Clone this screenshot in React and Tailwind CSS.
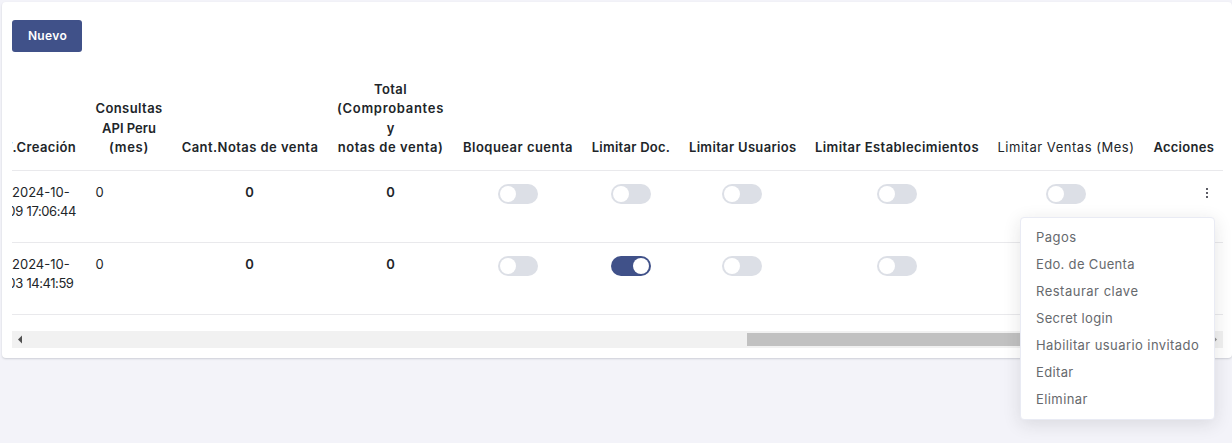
const GRID = "grid grid-cols-[74px_86px_155px_127px_128px_97px_126px_184px_154px_80px]";

const ROWS = [
  { day: "09", time: "17:06:44", timeClass: "tracking-[-0.4px]", switches: [false, false, false, false, false] },
  { day: "03", time: "14:41:59", timeClass: "tracking-[-0.45px]", switches: [false, true, false, false, false] },
];

const MENU = [
  ["Pagos", "tracking-[0.5px]"],
  ["Edo. de Cuenta", "tracking-[0.33px]"],
  ["Restaurar clave", "tracking-[0.5px]"],
  ["Secret login", "tracking-[0.3px]"],
  ["Habilitar usuario invitado", "tracking-[0.42px]"],
  ["Editar", "tracking-[0.35px]"],
  ["Eliminar", "tracking-[0.42px]"],
];

function Switch({ on }) {
  return (
    <span
      role="switch"
      aria-checked={on}
      className={`flex h-5 w-10 items-center rounded-full px-0.5 ${on ? "justify-end bg-[#405189]" : "justify-start bg-[#dcdfe6]"}`}
    >
      <span className="size-4 rounded-full bg-white" />
    </span>
  );
}

function Head({ className = "", children }) {
  return <div className={`flex flex-col items-center justify-end whitespace-nowrap pb-[12.5px] ${className}`}>{children}</div>;
}

function Row({ row, first }) {
  return (
    <div className={`${GRID} h-[72px] border-b border-[#e9e9ec] pt-3`}>
      <div className="flex flex-col overflow-hidden whitespace-nowrap leading-[19px]">
        <span className="tracking-[0px]">2024-10-</span>
        <span className="-ml-1.5 flex w-[70px] justify-end gap-[3.5px]">
          <span className="tracking-[-0.2px]">{row.day}</span>
          <span className={`w-[49.5px] ${row.timeClass}`}>{row.time}</span>
        </span>
      </div>
      <div className="pl-[9.5px]">0</div>
      <div className="text-center font-semibold">0</div>
      <div className="text-center font-semibold">0</div>
      {row.switches.map((on, i) => (
        <div key={i} className="flex justify-center pt-px">
          <Switch on={on} />
        </div>
      ))}
      <div className="flex justify-end pr-[14px] pt-[5px]">
        {first && (
          <svg width="4" height="12" viewBox="0 0 4 12" fill="#5d5d66" aria-hidden="true">
            <rect x="1" y="0" width="2" height="2" />
            <rect x="1" y="4" width="2" height="2" />
            <rect x="1" y="8" width="2" height="2" />
          </svg>
        )}
      </div>
    </div>
  );
}

export default function App() {
  return (
    <div className="relative h-[443px] w-[1232px] overflow-hidden bg-[#f3f3f9] pl-0.5 pt-0.5 font-['Inter',sans-serif] text-[13px] leading-[19.5px] text-[#212529]">
      <main className="flex h-[356px] flex-col rounded bg-white pl-2.5 pt-[18px] shadow-[0_1px_2px_rgba(56,65,74,0.2)]">
        <button className="h-8 w-[70px] rounded-[3px] bg-[#405189] pl-px text-xs font-semibold tracking-[0.35px] text-white">
          Nuevo
        </button>

        <div className="mt-[27px] w-[1211px]">
          <div className={`${GRID} h-[92px] border-b border-[#e9e9ec] font-semibold`}>
            <Head className="overflow-hidden">
              <span className="mr-2.5 self-end tracking-[0.36px]">F.Creación</span>
            </Head>
            <Head>
              <span className="tracking-[0.42px]">Consultas</span>
              <span>API Peru</span>
              <span className="tracking-[0.7px]">(mes)</span>
            </Head>
            <Head className="pl-px"><span className="tracking-[0.44px]">Cant.Notas de venta</span></Head>
            <Head>
              <span className="tracking-[0.4px]">Total</span>
              <span className="tracking-[0.7px]">(Comprobantes</span>
              <span>y</span>
              <span className="tracking-[0.54px]">notas de venta)</span>
            </Head>
            <Head><span className="tracking-[0.46px]">Bloquear cuenta</span></Head>
            <Head className="pl-px"><span className="tracking-[0.26px]">Limitar Doc.</span></Head>
            <Head className="pl-[1.5px]"><span className="tracking-[0.33px]">Limitar Usuarios</span></Head>
            <Head><span className="tracking-[0.42px]">Limitar Establecimientos</span></Head>
            <Head className="font-normal"><span className="tracking-[0.52px]">Limitar Ventas (Mes)</span></Head>
            <Head className="pl-[1.5px]"><span className="tracking-[0.28px]">Acciones</span></Head>
          </div>
          {ROWS.map((row, i) => (
            <Row key={row.time} row={row} first={i === 0} />
          ))}

          <div className="mt-4 flex h-[17px] items-center justify-between bg-[#f1f1f1]">
            <svg width="17" height="17" viewBox="0 0 17 17" fill="#505050" aria-hidden="true">
              <path d="M10 4.5v8L6 8.5z" />
            </svg>
            <div className="ml-auto h-[13px] w-[459px] bg-[#c1c1c1]" />
            <svg width="17" height="17" viewBox="0 0 17 17" fill="#8f8f8f" aria-hidden="true">
              <path d="M7 4.5v8l4-4z" />
            </svg>
          </div>
        </div>
      </main>

      <div
        role="menu"
        className="absolute left-[1020px] top-[217px] flex h-[203px] w-[195px] flex-col rounded border border-[#e9ebf4] bg-white py-1.5 text-[#66696d] shadow-[0_4px_18px_rgba(30,32,37,0.12)]"
      >
        {MENU.map(([label, tracking]) => (
          <span key={label} role="menuitem" className={`flex h-[27px] shrink-0 items-center whitespace-nowrap pl-[15px] ${tracking}`}>
            {label}
          </span>
        ))}
      </div>
    </div>
  );
}
